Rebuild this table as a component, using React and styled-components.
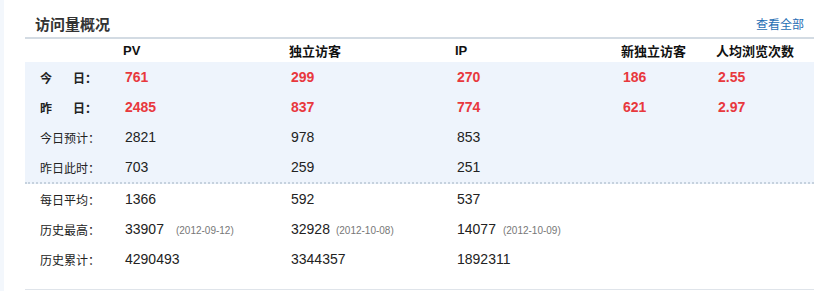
import styled, { createGlobalStyle } from "styled-components";

const GlobalStyle = createGlobalStyle`
  html, body {
    margin: 0;
    padding: 0;
    background: #fff;
  }
  body {
    font-family: "Liberation Sans", "Noto Sans CJK SC", sans-serif;
    color: #333;
  }
`;

const Page = styled.div`
  display: flex;
  height: 291px;
  overflow: hidden;
`;

const Strip = styled.div`
  width: 4px;
  background: #f3f7fc;
  flex-shrink: 0;
`;

const Panel = styled.div`
  flex: 1;
  margin-left: 21px;
  display: flex;
  flex-direction: column;
`;

const Header = styled.div`
  height: 27px;
  padding: 10px 10px 0 10px;
  display: flex;
  align-items: center;
  justify-content: space-between;
  border-bottom: 2px solid #d3dbe3;
`;

const Title = styled.h2`
  margin: 0;
  font-size: 15px;
  font-weight: bold;
  color: #333;
`;

const More = styled.a`
  font-size: 12px;
  color: #1f6eb4;
  text-decoration: none;
  cursor: pointer;
`;

const Row = styled.div`
  display: grid;
  grid-template-columns: 98px 166px 166px 166px 95px 1fr;
  align-items: center;
  height: ${(p) => p.$h || 30}px;
`;

const Head = styled.div`
  font-size: 13px;
  font-weight: bold;
  color: #111;
`;

const Section = styled.div`
  background: ${(p) => (p.$blue ? "#eef4fc" : "transparent")};
  border-bottom: ${(p) => (p.$blue ? "2px dotted #c6d2de" : "none")};
  padding-bottom: ${(p) => p.$pad || 0}px;
`;

const Label = styled.div`
  padding-left: 15px;
  font-size: 12px;
  font-weight: ${(p) => (p.$bold ? "bold" : "normal")};
  color: #222;
  white-space: nowrap;
`;

const Gap = styled.span`
  display: inline-block;
  width: 21px;
`;

const Value = styled.div`
  padding-left: 2px;
  font-size: 14px;
  font-weight: ${(p) => (p.$hot ? "bold" : "normal")};
  color: ${(p) => (p.$hot ? "#e8383d" : "#222")};
  white-space: nowrap;
`;

const DateNote = styled.span`
  margin-left: ${(p) => p.$gap || 12}px;
  font-size: 10px;
  color: #777;
`;

const BottomLine = styled.div`
  border-top: 1px solid #dfe4ea;
`;

const heads = ["PV", "独立访客", "IP", "新独立访客", "人均浏览次数"];

const hotRows = [
  { a: "今", b: "日：", vals: ["761", "299", "270", "186", "2.55"] },
  { a: "昨", b: "日：", vals: ["2485", "837", "774", "621", "2.97"] },
];

const plainRows = [
  { label: "今日预计：", vals: ["2821", "978", "853"] },
  { label: "昨日此时：", vals: ["703", "259", "251"] },
];

const historyRows = [
  { label: "每日平均：", vals: [["1366"], ["592"], ["537"]] },
  {
    label: "历史最高：",
    vals: [
      ["33907", "(2012-09-12)", 12],
      ["32928", "(2012-10-08)", 6],
      ["14077", "(2012-10-09)", 7],
    ],
  },
  { label: "历史累计：", vals: [["4290493"], ["3344357"], ["1892311"]] },
];

const App = () => {
  return (
    <Page>
      <GlobalStyle />
      <Strip />
      <Panel>
        <Header>
          <Title>访问量概况</Title>
          <More>查看全部</More>
        </Header>
        <Row $h={23}>
          <div />
          {heads.map((h) => (
            <Head key={h}>{h}</Head>
          ))}
        </Row>
        <Section $blue>
          {hotRows.map((r) => (
            <Row key={r.a}>
              <Label $bold>
                {r.a}
                <Gap />
                {r.b}
              </Label>
              {r.vals.map((v, i) => (
                <Value $hot key={i}>
                  {v}
                </Value>
              ))}
            </Row>
          ))}
          {plainRows.map((r) => (
            <Row key={r.label}>
              <Label>{r.label}</Label>
              {r.vals.map((v, i) => (
                <Value key={i}>{v}</Value>
              ))}
            </Row>
          ))}
        </Section>
        <Section $pad={15}>
          {historyRows.map((r) => (
            <Row key={r.label}>
              <Label>{r.label}</Label>
              {r.vals.map(([v, d, g], i) => (
                <Value key={i}>
                  {v}
                  {d && <DateNote $gap={g}>{d}</DateNote>}
                </Value>
              ))}
            </Row>
          ))}
        </Section>
        <BottomLine />
      </Panel>
    </Page>
  );
};

export default App;
